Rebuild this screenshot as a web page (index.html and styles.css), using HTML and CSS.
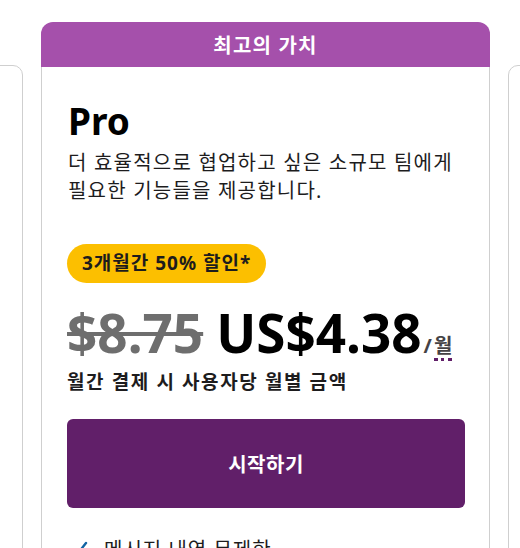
FILE: index.html
```html
<!DOCTYPE html>
<html lang="ko">
<head>
<meta charset="utf-8">
<link rel="stylesheet" href="styles.css">
</head>
<body>
<div class="row">
  <div class="card side"></div>
  <div class="featured">
    <div class="ribbon">최고의 가치</div>
    <div class="card main">
      <h1 class="plan">Pro</h1>
      <p class="desc">더 효율적으로 협업하고 싶은 소규모 팀에게<br>필요한 기능들을 제공합니다.</p>
      <div class="badge">3개월간 50% 할인*</div>
      <div class="price">
        <span class="old">$8.75</span>
        <span class="new">US$4.38</span><span class="per">/<span class="unit">월</span></span>
      </div>
      <div class="note">월간 결제 시 사용자당 월별 금액</div>
      <a class="cta">시작하기</a>
      <ul class="features">
        <li><svg class="check" viewBox="0 0 22 22" width="22" height="22"><path d="M3 13 L8 18 L19 4" fill="none" stroke="#1264a3" stroke-width="2.4" stroke-linecap="round" stroke-linejoin="round"/></svg><span>메시지 내역 무제한</span></li>
      </ul>
    </div>
  </div>
  <div class="card side"></div>
</div>
</body>
</html>
```

FILE: styles.css
```css
html, body {
  margin: 0;
  padding: 0;
  background: #fff;
  overflow: hidden;
  height: 548px;
}
body {
  font-family: "Noto Sans", "Noto Sans CJK KR", sans-serif;
  color: #1d1c1d;
}
.row {
  display: flex;
  gap: 18px;
  margin-left: -426px;
  padding-top: 22px;
  width: 1400px;
  align-items: flex-start;
}
.card {
  box-sizing: border-box;
  width: 449px;
  border: 1px solid #cfcfcf;
  background: #fff;
}
.side {
  margin-top: 43px;
  height: 700px;
  border-radius: 10px;
}
.featured {
  width: 449px;
  flex: none;
}
.ribbon {
  height: 45px;
  background: #a550ab;
  color: #fff;
  border-radius: 12px 12px 0 0;
  font-weight: 700;
  font-size: 20px;
  letter-spacing: 1.2px;
  display: flex;
  align-items: center;
  justify-content: center;
}
.main {
  border-top: none;
  padding: 30px 24px 0 25px;
  height: 700px;
}
.plan {
  margin: 0 0 0 1px;
  font-size: 37px;
  font-weight: 700;
  line-height: 48px;
  color: #000;
}
.desc {
  margin: 4px 0 0 1px;
  font-size: 20px;
  letter-spacing: 1.2px;
  line-height: 28px;
  color: #1d1c1d;
}
.badge {
  display: inline-block;
  margin-top: 39px;
  background: #fcbf00;
  border-radius: 20px;
  padding: 0 15px;
  height: 39px;
  line-height: 39px;
  font-size: 19px;
  letter-spacing: 1px;
  font-weight: 700;
  color: #1d1c1d;
}
.price {
  margin-top: 20px;
  display: flex;
  align-items: baseline;
  white-space: nowrap;
  line-height: 60px;
  height: 60px;
}
.old {
  font-size: 53px;
  font-weight: 700;
  color: #6e6e6e;
  text-decoration: line-through;
  text-decoration-thickness: 4px;
  margin-right: 13px;
}
.new {
  font-size: 53px;
  font-weight: 700;
  color: #000;
}
.per {
  font-size: 20px;
  font-weight: 700;
  color: #454245;
  margin-left: 2px;
}
.unit {
  display: inline-block;
  line-height: 24px;
  border-bottom: 3px dotted #611f69;
  margin-left: 2px;
}
.note {
  margin-top: 6px;
  font-size: 19px;
  line-height: 26px;
  letter-spacing: 1.6px;
  font-weight: 700;
  color: #1d1c1d;
}
.cta {
  display: flex;
  align-items: center;
  justify-content: center;
  margin-top: 24px;
  height: 89px;
  width: 398px;
  background: #611f69;
  color: #fff;
  border-radius: 6px;
  font-size: 20px;
  letter-spacing: 0.5px;
  font-weight: 700;
}
.features {
  list-style: none;
  margin: 28px 0 0;
  padding: 0;
}
.features li {
  display: flex;
  align-items: center;
  gap: 15px;
  font-size: 20px;
  line-height: 28px;
  letter-spacing: 1px;
}
.check {
  flex: none;
}
```
